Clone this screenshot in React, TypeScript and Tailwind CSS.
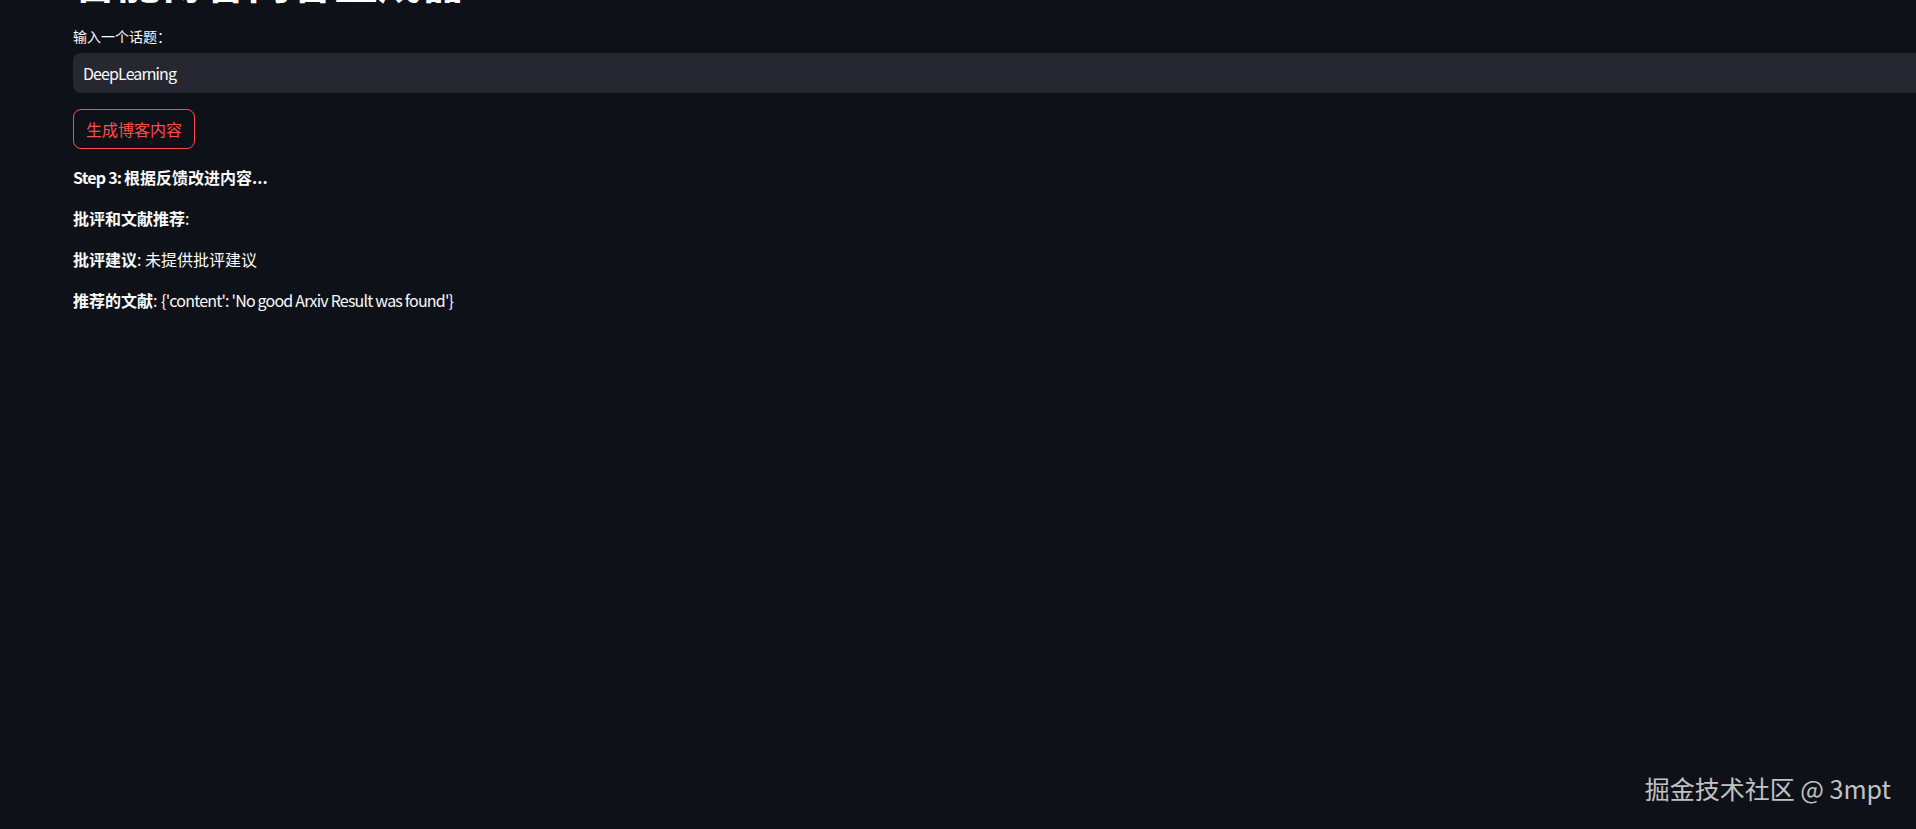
import { useState } from "react"

const font = "font-['Noto_Sans_CJK_SC','Noto_Sans',sans-serif]"

export default function App() {
  const [topic, setTopic] = useState("DeepLearning")

  return (
    <div className={`relative min-h-screen overflow-hidden bg-[#0e1117] text-[#fafafa] ${font}`}>
      <div className="flex flex-col items-start pl-[73px]">
        {/* Title, scrolled mostly out of view */}
        <h1 className="-mt-[42px] h-[44px] text-[44px] font-bold leading-[44px] tracking-[-0.5px] text-white">
          智能博客内容生成器
        </h1>

        <label className="mt-[24px] h-[20px] text-[14px] leading-[20px]">输入一个话题：</label>
        <input
          value={topic}
          onChange={(e) => setTopic(e.target.value)}
          className="mt-[7px] h-[40px] w-full rounded-l-lg bg-[#262730] pl-[10px] text-[16px] tracking-[-0.9px] text-[#fafafa] outline-none"
        />

        <button className="mt-[16px] h-[40px] rounded-lg border border-[#ff4b4b] px-[12px] text-[16px] leading-[38px] text-[#ff4b4b]">
          生成博客内容
        </button>

        <div className="mt-[16px] flex flex-col gap-[17px] text-[16px] leading-[24px]">
          <p className="font-bold">
            <span className="tracking-[-0.8px]">Step 3: </span>根据反馈改进内容...
          </p>
          <p>
            <strong>批评和文献推荐</strong>:
          </p>
          <p>
            <strong>批评建议</strong>: 未提供批评建议
          </p>
          <p>
            <strong>推荐的文献</strong>:{" "}
            <span className="tracking-[-0.8px]">{"{'content': 'No good Arxiv Result was found'}"}</span>
          </p>
        </div>
      </div>

      {/* Watermark */}
      <div className="absolute right-[25px] bottom-[26px] text-[25px] leading-[30px] text-white/75">
        掘金技术社区 @ 3mpt
      </div>
    </div>
  )
}
